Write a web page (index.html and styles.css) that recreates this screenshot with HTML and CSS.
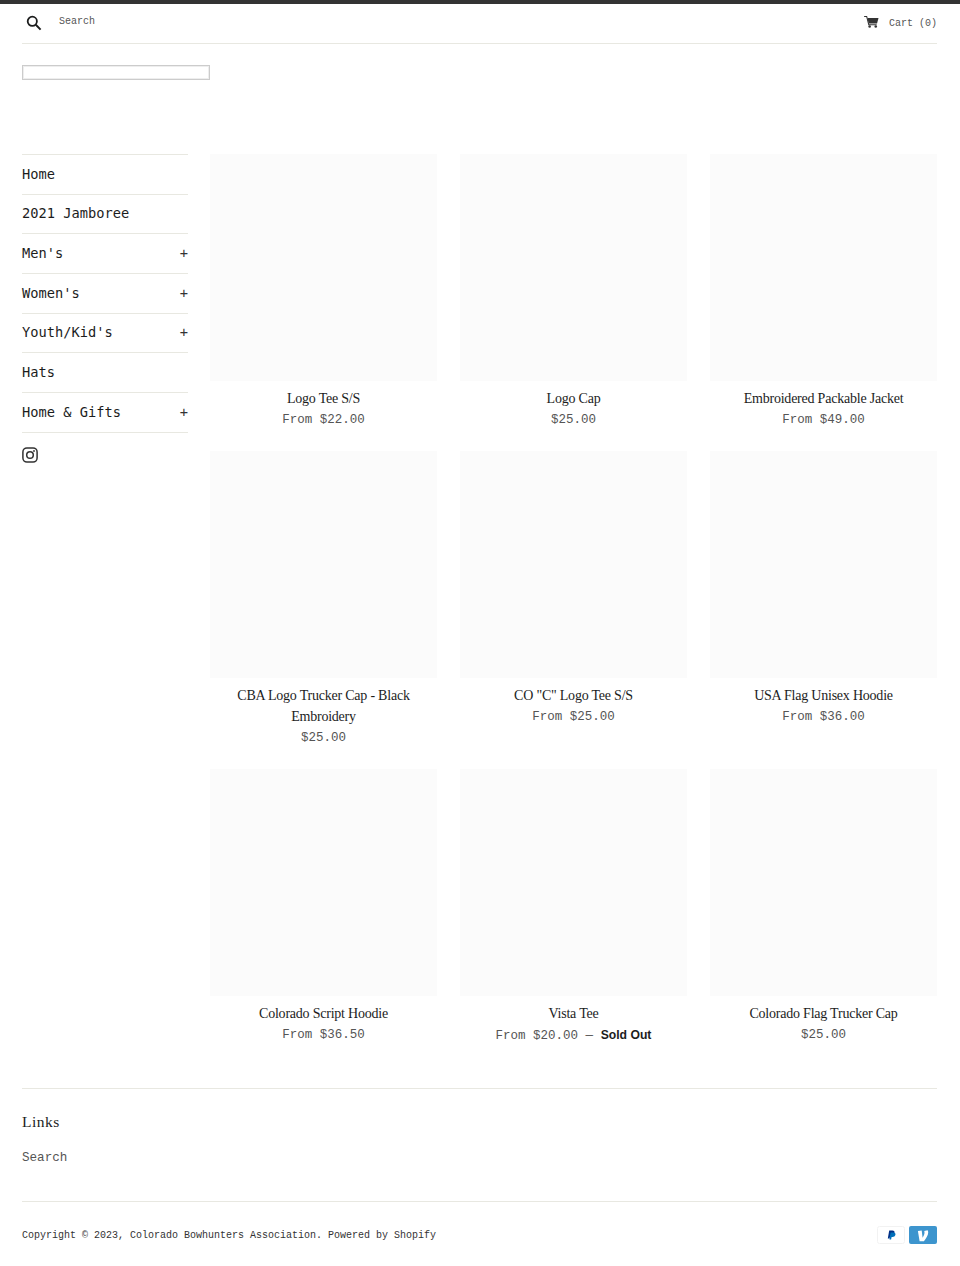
FILE: index.html
```html
<!doctype html>
<html lang="en">
  <head>
    <meta charset="UTF-8" />
    <meta name="viewport" content="width=device-width, initial-scale=1.0" />
    <title>Colorado Bowhunters Association</title>
    <link rel="stylesheet" href="styles.css">
  </head>
  <body>
    <div class="page">
      <header class="top-bar">
        <form class="search-form">
          <svg class="search-icon" viewBox="0 0 16 16" width="16" height="16">
            <circle cx="6.3" cy="6.3" r="4.6" fill="none" stroke="#1c1d1d" stroke-width="1.8" />
            <path d="M9.8 9.8 L14.6 14.6" stroke="#1c1d1d" stroke-width="2" />
          </svg>
          <span class="search-label">Search</span>
        </form>
        <a class="cart-link" href="#">
          <svg class="cart-icon" viewBox="0 0 16 13" width="15" height="12">
            <path d="M0 0.6 H2.8 L5 9.4 H13.6" fill="none" stroke="#333" stroke-width="1.1" />
            <path d="M3.6 2.2 H15.6 L14 8 H5 Z" fill="#333" />
            <circle cx="6" cy="11.4" r="1.4" fill="#333" />
            <circle cx="12.6" cy="11.4" r="1.4" fill="#333" />
          </svg>
          <span>Cart (0)</span>
        </a>
      </header>

      <div class="logo-box"></div>

      <div class="main">
        <nav class="sidebar">
          <ul class="site-nav">
            <li><a href="#">Home</a></li>
            <li><a href="#">2021 Jamboree</a></li>
            <li><a href="#">Men's<span class="plus">+</span></a></li>
            <li><a href="#">Women's<span class="plus">+</span></a></li>
            <li><a href="#">Youth/Kid's<span class="plus">+</span></a></li>
            <li><a href="#">Hats</a></li>
            <li><a href="#">Home &amp; Gifts<span class="plus">+</span></a></li>
          </ul>
          <a class="social" href="#">
            <svg viewBox="0 0 16 16" width="16" height="16">
              <rect x="0.9" y="0.9" width="14.2" height="14.2" rx="4" fill="none" stroke="#333" stroke-width="1.5" />
              <circle cx="8" cy="8" r="3.3" fill="none" stroke="#333" stroke-width="1.5" />
              <circle cx="12" cy="4" r="0.9" fill="#333" />
            </svg>
          </a>
        </nav>

        <div class="product-grid">
          <div class="product">
            <div class="product-image"></div>
            <div class="product-title">Logo Tee S/S</div>
            <div class="product-price">From $22.00</div>
          </div>
          <div class="product">
            <div class="product-image"></div>
            <div class="product-title">Logo Cap</div>
            <div class="product-price">$25.00</div>
          </div>
          <div class="product">
            <div class="product-image"></div>
            <div class="product-title">Embroidered Packable Jacket</div>
            <div class="product-price">From $49.00</div>
          </div>
          <div class="product">
            <div class="product-image"></div>
            <div class="product-title">CBA Logo Trucker Cap - Black Embroidery</div>
            <div class="product-price">$25.00</div>
          </div>
          <div class="product">
            <div class="product-image"></div>
            <div class="product-title">CO "C" Logo Tee S/S</div>
            <div class="product-price">From $25.00</div>
          </div>
          <div class="product">
            <div class="product-image"></div>
            <div class="product-title">USA Flag Unisex Hoodie</div>
            <div class="product-price">From $36.00</div>
          </div>
          <div class="product">
            <div class="product-image"></div>
            <div class="product-title">Colorado Script Hoodie</div>
            <div class="product-price">From $36.50</div>
          </div>
          <div class="product">
            <div class="product-image"></div>
            <div class="product-title">Vista Tee</div>
            <div class="product-price">From $20.00 &mdash; <strong class="sold-out">Sold Out</strong></div>
          </div>
          <div class="product">
            <div class="product-image"></div>
            <div class="product-title">Colorado Flag Trucker Cap</div>
            <div class="product-price">$25.00</div>
          </div>
        </div>
      </div>

      <footer class="site-footer">
        <div class="footer-links">
          <h3>Links</h3>
          <a href="#">Search</a>
        </div>
        <div class="footer-bottom">
          <span class="copyright">Copyright &copy; 2023, Colorado Bowhunters Association. Powered by Shopify</span>
          <div class="payments">
            <svg class="pay-card" viewBox="0 0 28 18" width="28" height="18">
              <rect x="0.5" y="0.5" width="27" height="17" rx="2" fill="#fff" stroke="#f2f2f2" />
              <path d="M12.2 4.6 H15.4 C17.2 4.6 17.9 5.7 17.4 7.3 C17 8.9 15.8 9.7 14.2 9.7 H13.2 L12.6 12.6 H10.8 Z" fill="#003087" />
              <path d="M13.6 6.4 H16.2 C18.2 6.4 18.8 7.4 18.4 8.8 C18 10.3 17 11 15.5 11 H14.6 L14.1 13.6 H12.5 Z" fill="#0070ba" />
            </svg>
            <svg class="pay-card" viewBox="0 0 28 18" width="28" height="18">
              <rect width="28" height="18" rx="2" fill="#3d95ce" />
              <path d="M18.6 4.2 C19 4.9 19.2 5.6 19.2 6.5 C19.2 9.3 16.8 12.9 14.9 15.2 H10.6 L8.9 5 L12.7 4.6 L13.6 11.8 C14.5 10.4 15.5 8.2 15.5 6.8 C15.5 6 15.4 5.5 15.2 5 Z" fill="#fff" />
            </svg>
          </div>
        </div>
      </footer>
    </div>
  </body>
</html>
```

FILE: styles.css
```css
* {
  box-sizing: border-box;
}
body {
  margin: 0;
  background: #fff;
  color: #1c1d1d;
  font-family: "Liberation Mono", monospace;
}
a {
  color: inherit;
  text-decoration: none;
}
.page {
  border-top: 4px solid #333;
  padding: 0 23px 0 22px;
  min-height: 1262px;
}

/* header */
.top-bar {
  display: flex;
  justify-content: space-between;
  height: 40px;
  border-bottom: 1px solid #e8e8e1;
}
.search-form {
  display: flex;
  gap: 17px;
  padding-left: 4px;
}
.search-icon {
  margin-top: 11px;
}
.search-label {
  margin-top: 11px;
  font-size: 10px;
  line-height: 14px;
  color: #555;
}
.cart-link {
  display: flex;
  gap: 10px;
  padding-top: 12px;
  font-size: 10px;
  line-height: 14px;
  color: #555;
}
.cart-link span {
  margin-top: 1px;
}
.logo-box {
  width: 188px;
  height: 15px;
  margin-top: 21px;
  border: 1px solid #ccc;
  box-shadow: inset 0 0 0 1px #eee;
}

/* main */
.main {
  display: flex;
  gap: 22px;
  margin-top: 74px;
}
.sidebar {
  flex: 0 0 166px;
}
.site-nav {
  list-style: none;
  margin: 0;
  padding: 0;
  border-top: 1px solid #e8e8e1;
}
.site-nav li {
  border-bottom: 1px solid #e8e8e1;
}
.site-nav a {
  display: flex;
  justify-content: space-between;
  height: 38.67px;
  padding-bottom: 1px;
  align-items: center;
  font-family: "DejaVu Sans Mono", monospace;
  font-size: 13.7px;
  color: #1c1d1d;
}
.plus {
  color: #333;
}
.social {
  display: block;
  margin-top: 14px;
}
.product-grid {
  flex: 1;
  display: grid;
  grid-template-columns: repeat(3, 227px);
  column-gap: 23px;
  row-gap: 20px;
}
.product {
  text-align: center;
}
.product-image {
  height: 227px;
  background: #fbfbfb;
}
.product-title {
  margin-top: 7px;
  padding: 0 20px;
  font-family: "Liberation Serif", serif;
  font-size: 14px;
  letter-spacing: -0.22px;
  line-height: 21px;
  color: #1c1d1d;
}
.product-price {
  margin-top: 1px;
  font-size: 12.5px;
  line-height: 21px;
  color: #555;
}
.sold-out {
  font-family: "Liberation Sans", sans-serif;
  font-size: 12.2px;
  color: #1c1d1d;
}

/* footer */
.site-footer {
  margin-top: 41px;
  border-top: 1px solid #e8e8e1;
}
.footer-links {
  height: 112px;
  padding-top: 22px;
}
.footer-links h3 {
  margin: 0;
  font-family: "Liberation Serif", serif;
  font-weight: normal;
  font-size: 15.5px;
  line-height: 21px;
  letter-spacing: 0.5px;
}
.footer-links a {
  display: block;
  margin-top: 16px;
  font-size: 12.6px;
  line-height: 21px;
  color: #555;
}
.footer-bottom {
  display: flex;
  justify-content: space-between;
  align-items: center;
  padding-top: 24px;
  border-top: 1px solid #e8e8e1;
}
.copyright {
  font-size: 10px;
  color: #333;
}
.payments {
  display: flex;
  gap: 4px;
}
```
